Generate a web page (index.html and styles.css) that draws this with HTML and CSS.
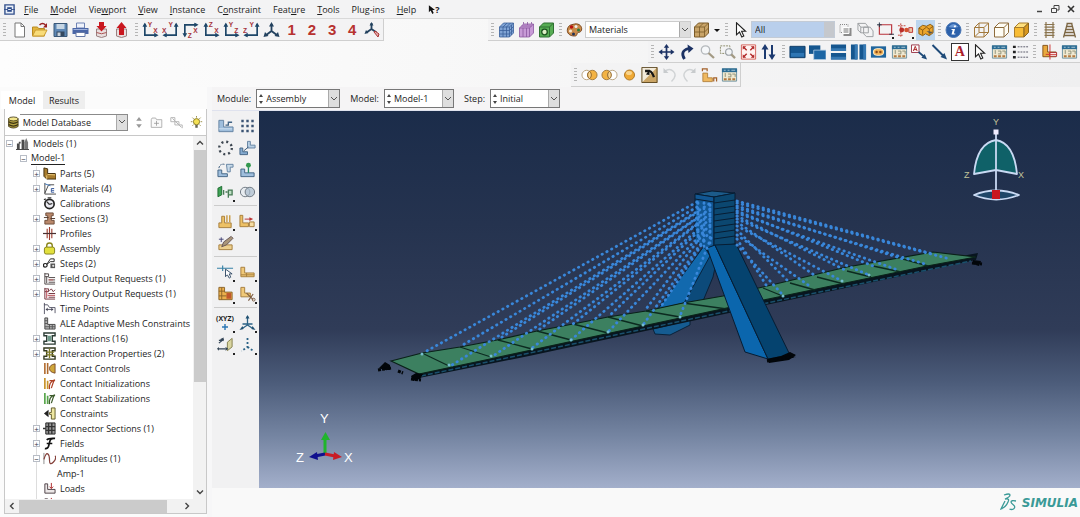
FILE: index.html
```html
<!DOCTYPE html>
<html lang="en">
<head>
<meta charset="utf-8">
<title>Model-1 - Assembly</title>
<link rel="stylesheet" href="styles.css">
</head>
<body>
<svg class="defs" aria-hidden="true">
  <symbol id="new" viewBox="0 0 16 16"><path d="M3.5 1h6l3.500 3.500V15h-9.500z" fill="#fff" stroke="#777"/><path d="M9.500 1v3.500H13" fill="none" stroke="#777"/></symbol>
  <symbol id="open" viewBox="0 0 16 16"><path d="M1 14V5h5l1 1.500h6V14z" fill="#e2b53c" stroke="#b98a20"/><path d="M1 14l3-6h11.500L12.500 14z" fill="#f8dc7a" stroke="#c99b30"/><path d="M8 3q3-3 6 0" fill="none" stroke="#922" stroke-width="1.500"/><path d="M15.500 1v4.500h-4z" fill="#922"/></symbol>
  <symbol id="save" viewBox="0 0 16 16"><path d="M1.500 1.500h13v13h-13z" fill="#5d87b5" stroke="#3b5877"/><path d="M4 2h8v5H4z" fill="#c6d6e4"/><path d="M4 9.500h8V14H4z" fill="#33475e"/><path d="M5 10.500h3V14H5z" fill="#c9d3dd"/></symbol>
  <symbol id="print" viewBox="0 0 16 16"><path d="M4 1h8v5H4z" fill="#eef2fb" stroke="#6f83b4"/><path d="M0 6h16v6H0z" fill="#4a66a6"/><path d="M1 7.500h14" stroke="#9fb2dc"/><path d="M3.500 10.500h9v4h-9z" fill="#fff" stroke="#6478a6"/></symbol>
  <symbol id="dbin" viewBox="0 0 16 16"><path d="M3 7v7q5 3 10 0V7z" fill="#e8dede" stroke="#9a8080"/><path d="M3 10.500q5 2.500 10 0" fill="none" stroke="#a55"/><path d="M5.500 0h5v4H13L8 9.500 3 4h2.500z" fill="#c9171f"/></symbol>
  <symbol id="dbout" viewBox="0 0 16 16"><path d="M3 7v7q5 3 10 0V7z" fill="#e8dede" stroke="#9a8080"/><path d="M5.500 13h5V6H13L8 0 3 6h2.500z" fill="#c9171f"/></symbol>
  <symbol id="axUR" viewBox="0 0 18 16"><path d="M3 2v11.500h11" fill="none" stroke="#1d4668" stroke-width="1.800"/><path d="M.5 4.500L3 0l2.500 4.500zM13 11l4.500 2.500L13 16z" fill="#1d4668"/></symbol>
  <symbol id="axUL" viewBox="0 0 18 16"><path d="M15 2v11.500H4" fill="none" stroke="#1d4668" stroke-width="1.800"/><path d="M12.500 4.500L15 0l2.500 4.500zM5 11L.5 13.500 5 16z" fill="#1d4668"/></symbol>
  <symbol id="axDR" viewBox="0 0 18 16"><path d="M3 13V2.500h11" fill="none" stroke="#1d4668" stroke-width="1.800"/><path d="M.5 11.500L3 16l2.500-4.500zM13 0l4.500 2.500L13 5z" fill="#1d4668"/></symbol>
  <symbol id="iso" viewBox="0 0 16 16"><path d="M8 2v7L2 13.500M8 9l6 4.500" fill="none" stroke="#23425f" stroke-width="1.800"/><path d="M5.500 4.500L8 0l2.500 4.500zM0 15l1.500-5L5 14zM16 15l-1.500-5-3.500 4z" fill="#23425f"/></symbol>
  <symbol id="isouser" viewBox="0 0 16 16"><path d="M7 1v6L2 10.500M7 7l5 3.500" fill="none" stroke="#23425f" stroke-width="1.800"/><path d="M5 3.500L7 0l2 3.500zM0 12l1.500-4L4 11z" fill="#23425f"/><path d="M9.500 10l4 5 1-3-4-3z" fill="#e6b0b0" stroke="#a33"/></symbol>
  <symbol id="mesh" viewBox="0 0 16 16"><path d="M1 5l4-4h10v10l-4 4H1z" fill="#7fa3d4"/><path d="M1 5h10v10M11 5l4-4M1 5v10h10l4-4V1H5L1 5M4.500 5v10M8 5v10M1 8.500h10l4-4M1 12h10l4-4M4.500 5l4-4M8 5l4-4M13 3v10" fill="none" stroke="#3a609a" stroke-width=".8"/></symbol>
  <symbol id="meshp" viewBox="0 0 16 16"><path d="M1 6l4-4h10v9l-4 4H1z" fill="#c79ad6"/><path d="M1 6h10v9M11 6l4-4M1 6v9h10l4-4V2H5L1 6M5 0v2M9 0v3M13 0v2M4.500 6v9M8 6v9M3 4h10" fill="none" stroke="#8a58a0" stroke-width=".8"/></symbol>
  <symbol id="meshg" viewBox="0 0 16 16"><path d="M1 5l4-4h10v10l-4 4H1z" fill="#57ad54" stroke="#2f7032"/><path d="M1 5h10v10M11 5l4-4" fill="none" stroke="#2f7032"/><circle cx="6" cy="10" r="2.800" fill="#dff0c8" stroke="#1d5420" stroke-width="1.300"/></symbol>
  <symbol id="palette" viewBox="0 0 16 16"><path d="M8 2c5-1 8 3 7 6s-3 2-4 3 0 3-3 3C3 14 0 11 1 7s3-4 7-5z" fill="#c98a4a" stroke="#7c4a22"/><circle cx="5" cy="5" r="1.700" fill="#b11"/><circle cx="9.500" cy="4.500" r="1.500" fill="#eee"/><circle cx="12" cy="8" r="1.500" fill="#2b7a3b"/><circle cx="4" cy="9" r="1.600" fill="#f4e6d0"/><circle cx="7" cy="12" r="1.500" fill="#235"/></symbol>
  <symbol id="cubetan" viewBox="0 0 16 16"><path d="M1 5l4-4h10v10l-4 4H1z" fill="#c9a468" stroke="#7a5a28"/><path d="M1 5h10v10M11 5l4-4M6 5v10M1 10h10l4-4M6 5l4-4" fill="none" stroke="#7a5a28" stroke-width=".8"/></symbol>
  <symbol id="cursor" viewBox="0 0 16 16"><path d="M4 .8v12l3-2.800 2.300 5 2-1-2.200-4.700h4z" fill="#fff" stroke="#222" stroke-width="1.100"/></symbol>
  <symbol id="squares" viewBox="0 0 16 16"><path d="M2.500 2.500h8v8h-8z" fill="none" stroke="#888" stroke-dasharray="1"/><path d="M6 6h8v8H6z" fill="#8a8a8a"/><path d="M5.500 5.500h6v6h-6z" fill="#b9b9b9" stroke="#fff"/></symbol>
  <symbol id="cubegray" viewBox="0 0 18 16"><path d="M1 1h8l3 4v6H4L1 8zM1 1l3 4h8M4 5v6M7 5h7l3 4v6h-7l-3-3z" fill="none" stroke="#9a9da0"/></symbol>
  <symbol id="rectsel" viewBox="0 0 18 16"><path d="M2.500 2.500h13v10h-13z" fill="none" stroke="#b9323a" stroke-width="1.200"/><path d="M2.500 0v5M0 2.500h5M13 12.500h5" stroke="#234"/></symbol>
  <symbol id="selents" viewBox="0 0 18 16"><path d="M1 3.500h8M4 1v14M1 13.500h6" stroke="#c03a32" stroke-dasharray="2 1"/><circle cx="5" cy="8" r="2.600" fill="#bb2d28"/><circle cx="10" cy="8" r="2.400" fill="#d4512e"/><path d="M12.500 5.500h4v5h-4z" fill="#eec7a6" stroke="#b33"/></symbol>
  <symbol id="part3" viewBox="0 0 18 16"><path d="M2 6l4-3 4 1 4-2 3 2v7l-4 3-4-2-3 2-4-2z" fill="#eca62d" stroke="#8a5a10"/><path d="M2 6l4 2 4-3M10 5l3 2 4-3M13 7v6M6 8v5" fill="none" stroke="#8a5a10"/><path d="M10 9l7 1-3 2z" fill="#555"/></symbol>
  <symbol id="info" viewBox="0 0 16 16"><circle cx="8" cy="8" r="7.500" fill="#2c61ab" stroke="#4a76b4"/><path d="M3 5q5-6 10 0-5 1-10 0" fill="#6d9ad6"/><path d="M8.600 3.500h2l-.4 1.800h-2zM6 7h3.500L8.300 11.500h1.500v1H6L7.200 8H6z" fill="#fff"/></symbol>
  <symbol id="cubewire" viewBox="0 0 16 16"><path d="M1 5.500h9.500V15H1zM5.500 1H15v9.500H5.500zM1 5.500L5.500 1M10.500 5.500L15 1M10.500 15l4.500-4.500M1 15l4.500-4.500" fill="none" stroke="#a2793c"/></symbol>
  <symbol id="cubehid" viewBox="0 0 16 16"><path d="M1 5.500h9.500V15H1zM1 5.500L5.500 1H15v9.500L10.500 15M10.500 5.500L15 1" fill="#fffdf5" stroke="#8e6c3c"/></symbol>
  <symbol id="cubefill" viewBox="0 0 16 16"><path d="M1 5.500h9.500V15H1z" fill="#f8bc35" stroke="#a87c2c"/><path d="M1 5.500L5.500 1H15l-4.500 4.500z" fill="#ffe07d" stroke="#a87c2c"/><path d="M15 1v9.500L10.500 15V5.500z" fill="#d89820" stroke="#8a641c"/></symbol>
  <symbol id="rail1" viewBox="0 0 16 16"><path d="M4.500 0v16M11.500 0v16M3 2.500h10M3 5.200h10M3 7.900h10M3 10.600h10M3 13.300h10" stroke="#8a744e" stroke-width="1.200"/></symbol>
  <symbol id="rail2" viewBox="0 0 16 16"><path d="M6 1L2 15.500M10 1l4 14.500M5 1.500h6M5 4.500h6M4 7.500h8M3.500 10.500h9M2.500 13.500h11" stroke="#7c6643" stroke-width="1.300"/></symbol>
  <symbol id="pan" viewBox="0 0 16 16"><path d="M8 2v12M2 8h12" stroke="#1c3264" stroke-width="1.700"/><path d="M5.300 3.800L8 0l2.700 3.800zM5.300 12.200L8 16l2.700-3.800zM3.800 5.300L0 8l3.800 2.700zM12.200 5.300L16 8l-3.800 2.700z" fill="#1c3264"/></symbol>
  <symbol id="rotate" viewBox="0 0 16 16"><path d="M5 15Q0 7 9 4.500" fill="none" stroke="#1c3264" stroke-width="2.800"/><path d="M8 .5l6 4L9 9z" fill="#1c3264"/></symbol>
  <symbol id="zoomer" viewBox="0 0 16 16"><circle cx="6" cy="6" r="4.200" fill="#f6f8fa" stroke="#b4b8bc" stroke-width="1.300"/><path d="M9 9l5.500 5" stroke="#a39a84" stroke-width="2.300"/></symbol>
  <symbol id="zoombox" viewBox="0 0 18 16"><path d="M1.500 1.500h10v8h-10z" fill="none" stroke="#886" stroke-dasharray="2 1"/><circle cx="10.500" cy="8" r="3.500" fill="#f3f5f7" stroke="#9aa0a6" stroke-width="1.200"/><path d="M13 10.500l4 4" stroke="#a39a84" stroke-width="2.300"/></symbol>
  <symbol id="fit" viewBox="0 0 18 18"><path d="M1 1h16v16H1z" fill="#fff4f2" stroke="#d35a52"/><path d="M3 3l4 4M15 3l-4 4M3 15l4-4M15 15l-4-4" stroke="#b22c2c" stroke-width="1.600"/><path d="M2.500 2.500h4l-4 4zM15.500 2.500h-4l4 4zM2.500 15.500h4l-4-4zM15.500 15.500h-4l4-4z" fill="#b22c2c"/></symbol>
  <symbol id="cycle" viewBox="0 0 16 16"><path d="M4.500 15V4M11.500 1v11" stroke="#1c3a70" stroke-width="2"/><path d="M1 5.500L4.500 0 8 5.500zM8 10.500l3.500 5.500 3.500-5.500z" fill="#1c3a70"/></symbol>
  <symbol id="w1" viewBox="0 0 18 16"><path d="M1 2h16v12H1z" fill="#15568f" stroke="#0c3a66"/><path d="M2 9h14v4H2z" fill="#2e76b4"/></symbol>
  <symbol id="w2" viewBox="0 0 18 16"><path d="M0 1h12v9H0z" fill="#15568f"/><path d="M5 6h13v10H5z" fill="#1d66a4" stroke="#b9d0e6" stroke-width=".8"/></symbol>
  <symbol id="w3" viewBox="0 0 18 16"><path d="M1 0h16v7H1zM1 9h16v7H1z" fill="#15568f"/><path d="M1 4h16v3H1zM1 13h16v3H1z" fill="#3679b3"/></symbol>
  <symbol id="w4" viewBox="0 0 18 16"><path d="M1 0h7v16H1zM10 0h7v16h-7z" fill="#15568f"/><path d="M5 0h3v16H5zM14 0h3v16h-3z" fill="#3679b3"/></symbol>
  <symbol id="w5" viewBox="0 0 18 16"><path d="M1 2h16v12H1z" fill="#20659d"/><rect x="3.500" y="4.500" width="11" height="7" rx="3.500" fill="#f0b155" stroke="#fff0cf"/><circle cx="7" cy="8" r="1.300" fill="#8c4a17"/><circle cx="11" cy="8" r="1.300" fill="#8c4a17"/></symbol>
  <symbol id="opts" viewBox="0 0 18 16"><path d="M1.500 1.500h15v13h-15z" fill="#efe8d0" stroke="#6b909f"/><path d="M1 1h16v4H1z" fill="#2d6d94"/><path d="M3 3h2M7 3h2M11 3h4" stroke="#a9c6d6"/><path d="M4.500 6v4M7.500 7h3v3h-3M12 7h3v3" fill="none" stroke="#8d9078"/><path d="M3 12.500h3M7.500 12.500h3M12 12.500h3" stroke="#b5793f" stroke-width="2"/></symbol>
  <symbol id="arrA" viewBox="0 0 18 16"><path d="M.5.500h8v8h-8z" fill="#fff" stroke="#934"/><path d="M2.500 7L4.500 2l2 5M3 5.500h3" stroke="#a22" fill="none"/><path d="M8 8l6 5" stroke="#1e4a78" stroke-width="1.800"/><path d="M17 16l-6-2 3.500-4z" fill="#1e4a78"/></symbol>
  <symbol id="arr" viewBox="0 0 16 16"><path d="M1 1l11 11" stroke="#1e4a78" stroke-width="2"/><path d="M15.500 15.500L9 13l4-4z" fill="#1e4a78"/></symbol>
  <symbol id="list" viewBox="0 0 18 16"><path d="M1 2.500h3M1 8h3M1 13.500h3" stroke="#222" stroke-width="2.500"/><path d="M6 2.500h11M6 8h11M6 13.500h11" stroke="#556" stroke-dasharray="2 1"/></symbol>
  <symbol id="lcross" viewBox="0 0 18 16"><path d="M2 1h5v7h9v5H2z" fill="#e9a93d" stroke="#835116"/><path d="M9 8.500h7.500v4H9z" fill="#fff" stroke="#a33"/><path d="M9.500 0v16M5 10.500h12" stroke="#c33"/></symbol>
  <symbol id="venn1" viewBox="0 0 18 16"><circle cx="6" cy="8" r="5" fill="#fff" stroke="#b8a17c"/><circle cx="12" cy="8" r="5" fill="#f3b344" stroke="#a37a3c"/><path d="M9 4a5 5 0 0 1 0 8 5 5 0 0 1 0-8" fill="#f8d48e" stroke="#8e6326"/></symbol>
  <symbol id="venn2" viewBox="0 0 18 16"><circle cx="6" cy="8" r="5" fill="#f3b344" stroke="#a37a3c"/><circle cx="12" cy="8" r="5" fill="#fff" stroke="#b8a17c"/><path d="M9 4a5 5 0 0 1 0 8 5 5 0 0 1 0-8" fill="#f8d48e" stroke="#8e6326"/></symbol>
  <symbol id="disc" viewBox="0 0 16 16"><circle cx="8" cy="8" r="5" fill="#efa935" stroke="#b07a29"/><ellipse cx="7.500" cy="6" rx="3" ry="2" fill="#f9d48c"/></symbol>
  <symbol id="pick" viewBox="0 0 18 18"><path d="M0 0h18v18H0z" fill="#cba565"/><path d="M0 18L18 0H0z" fill="#f3ebda"/><path d="M.5.500h17v17H.500z" fill="none" stroke="#54401d"/><path d="M4 4.500h5q3 1 5 7" fill="none" stroke="#151515" stroke-width="2.600"/><path d="M5 8.500L9 3v6z" fill="#151515"/></symbol>
  <symbol id="undo" viewBox="0 0 16 16"><path d="M3 4.500q5-4 9 0t-2 10" fill="none" stroke="#d0d3d5" stroke-width="1.400"/><path d="M2 1v5h5z" fill="#c8cbcd"/></symbol>
  <symbol id="redo" viewBox="0 0 16 16"><path d="M13 4.500q-5-4-9 0t2 10" fill="none" stroke="#d0d3d5" stroke-width="1.400"/><path d="M14 1v5H9z" fill="#c8cbcd"/></symbol>
  <symbol id="instset" viewBox="0 0 18 16"><path d="M2 6h5v5h5v4H2z" fill="#efb85f" stroke="#b5843f"/><path d="M1.500 4V1.500h5V4M13.500 15v-4h3v4" fill="none" stroke="#a4612a" stroke-width="1.300"/></symbol>
  <symbol id="Lb" viewBox="0 0 18 16"><path d="M2 2h5v7h10v5H2z" fill="#9fbedc" stroke="#6483a2"/><path d="M9 7h3V4h4" fill="none" stroke="#426485" stroke-width="1.400"/><path d="M2 11h14" stroke="#d3e3f1"/></symbol>
  <symbol id="dots" viewBox="0 0 16 16"><path d="M3 3h.01M8 3h.01M13 3h.01M3 8h.01M8 8h.01M13 8h.01M3 13h.01M8 13h.01M13 13h.01" stroke="#3b5474" stroke-width="2.400" stroke-linecap="square"/></symbol>
  <symbol id="ring" viewBox="0 0 16 16"><circle cx="8" cy="8" r="6.300" fill="none" stroke="#3d4650" stroke-width="2.300" stroke-dasharray="2 2.950"/></symbol>
  <symbol id="Lmove" viewBox="0 0 18 16"><path d="M9 1h3v4h5v3H9z" fill="#b7cfe4" stroke="#6483a2"/><path d="M1 8h3v4h5v3H1z" fill="#86abd0" stroke="#426485"/><path d="M10 7l-5 4" stroke="#357"/></symbol>
  <symbol id="Lrot" viewBox="0 0 18 16"><path d="M1 8h4v4h6v3H1z" fill="#9fbedc" stroke="#426485"/><path d="M10 2h7v3h-3v5h-3z" fill="#c8dae9" stroke="#6483a2"/><path d="M2 6q1-5 6-4" fill="none" stroke="#357" stroke-dasharray="2 1"/></symbol>
  <symbol id="Lpin" viewBox="0 0 18 16"><path d="M2 7h4v4h10v4H2z" fill="#9fbedc" stroke="#426485"/><path d="M10 5v6" stroke="#286" stroke-width="1.400"/><circle cx="10" cy="3" r="2.600" fill="#33984e"/></symbol>
  <symbol id="merge" viewBox="0 0 18 16"><path d="M1 4l4-2v9l-4 2z" fill="#3fa255" stroke="#1d6b30"/><path d="M7 6v5M9 8h2M12 11V6h4v5h-4v3" fill="#bfe0c4" stroke="#487a55" stroke-width="1.400"/></symbol>
  <symbol id="bool" viewBox="0 0 18 16"><circle cx="6.500" cy="8" r="5" fill="#e8ecf0" stroke="#6c7680"/><circle cx="11.500" cy="8" r="5" fill="#a9bccd" fill-opacity=".7" stroke="#6c7680"/></symbol>
  <symbol id="Ly" viewBox="0 0 18 16"><path d="M2 10h3V3h3v7h7v5H2z" fill="#edc166" stroke="#a67d3c"/><path d="M10.500 2v7M13.500 2v7" stroke="#c99b45" stroke-width="1.500"/></symbol>
  <symbol id="Ly2" viewBox="0 0 18 16"><path d="M1 2h3v8h6v4H1z" fill="#edc166" stroke="#a67d3c"/><path d="M11 9h5v5h-5z" fill="#f5dda4" stroke="#a67d3c"/><path d="M6 6h6" stroke="#b33"/><path d="M15 6l-4-2v4z" fill="#b33"/></symbol>
  <symbol id="Lface" viewBox="0 0 18 16"><path d="M2 3h4v6h10v4H2z" fill="#f0c979" stroke="#a67d3c"/><path d="M2 11h14M8 9v4" stroke="#a67d3c"/></symbol>
  <symbol id="Lcell" viewBox="0 0 18 16"><path d="M2 1h6v5h8v8H2z" fill="#eaaf4c" stroke="#8b6429"/><path d="M10 7h5v6h-5z" fill="#c0572c"/><path d="M2 5h6M5 1v13M2 10h8" stroke="#8b6429"/></symbol>
  <symbol id="Lcut" viewBox="0 0 18 16"><path d="M2 1h4v6h6v4H2z" fill="#f0c979" stroke="#a67d3c"/><path d="M8 7l7 7M15 8l-5 7" stroke="#7b5b42" stroke-width="1.200"/><circle cx="15.500" cy="14" r="1.500" fill="none" stroke="#7b5b42"/></symbol>
  <symbol id="Lpen" viewBox="0 0 18 16"><path d="M2 10h14v5H2z" fill="#edd08e" stroke="#a67d3c"/><path d="M5 12l2-5 8-6 2 2-7 7z" fill="#a9967a" stroke="#655"/><path d="M2 4h5M4.500 2v5" stroke="#447"/></symbol>
  <symbol id="datum" viewBox="0 0 18 16"><path d="M0 4h17M6 1v6" stroke="#3681a6" stroke-width="1.200"/><path d="M9 5v8l2-2 2 3.500 1.500-1L13 10h3z" fill="#fff" stroke="#334b66"/></symbol>
  <symbol id="axes" viewBox="0 0 16 16"><path d="M8 1v9L2 14M8 10l6 4M3 9h10" fill="none" stroke="#2a6286" stroke-width="1.300"/><path d="M6 3.500L8 0l2 3.500zM0 15l3-4 1 3zM16 15l-3-4-1 3z" fill="#1f4f70"/></symbol>
  <symbol id="plane" viewBox="0 0 18 16"><path d="M11 5l5-4v9l-5 4z" fill="#d9d5a0" stroke="#84804e"/><path d="M2 6l5-4M1 12h8M2 3h4" stroke="#345" stroke-width="1.300"/><path d="M7 0v4l-4-2zM9 10v4l3-2zM2 10v4l-2-2z" fill="#345"/></symbol>
  <symbol id="axdots" viewBox="0 0 16 16"><path d="M8 1v9L2 14M8 10l6 4" fill="none" stroke="#2a6286" stroke-width="1.800" stroke-dasharray="2"/></symbol>
  <symbol id="db" viewBox="0 0 16 16"><path d="M2 3v10q6 4 12 0V3z" fill="#b4a243" stroke="#3c3413"/><ellipse cx="8" cy="3.500" rx="6" ry="2.500" fill="#f2e58c" stroke="#3c3413"/><path d="M2 7q6 4 12 0M2 10.500q6 4 12 0" fill="none" stroke="#3c3413" stroke-width="1.500"/></symbol>
  <symbol id="bulb" viewBox="0 0 16 16"><circle cx="8" cy="7" r="3.800" fill="#f4e155" stroke="#776a18"/><path d="M6.500 11h3v3.500h-3z" fill="#665"/><path d="M8 0v2M1 7h2M13 7h2M3 2l1.500 1.500M13 2l-1.500 1.500M3 12l1.500-1.500M13 12l-1.500-1.500" stroke="#8d7e27"/></symbol>
  <symbol id="folder" viewBox="0 0 16 16"><path d="M1.500 4.500V14h13V4.500H8L7 2.500H2.500z" fill="#fafafa" stroke="#a5a5a5"/><path d="M8 6v6M5 9h6" stroke="#999"/></symbol>
  <symbol id="link" viewBox="0 0 16 16"><path d="M1 2h5v5H1zM6 7h5v4H6zM3 3l11 11M11 11h4v4" fill="none" stroke="#b5b5b5" stroke-width="1.200"/></symbol>
  <symbol id="t-models" viewBox="0 0 14 14"><path d="M1 13V7h3v6zM3 5h2v2H3zM6 13V3h3v10z" fill="#4b4b4b"/><path d="M9 13V6l2-5 2 5v7z" fill="#777"/><path d="M0 13.500h14" stroke="#333"/></symbol>
  <symbol id="t-part" viewBox="0 0 14 14"><path d="M1 1l4 1v5h8l1 1v5H4l-3-3z" fill="#a87c2e" stroke="#3d2908"/><path d="M5 8l8 .5M4 9v4" stroke="#edcc7e"/></symbol>
  <symbol id="t-mat" viewBox="0 0 14 14"><path d="M2 1v12h12M2 12L6 3h6" fill="none" stroke="#444"/><path d="M2 2l6 2" stroke="#3a74b8"/><path d="M12 7H9v4h3M9 9h3" fill="none" stroke="#35579b"/></symbol>
  <symbol id="t-cal" viewBox="0 0 14 14"><circle cx="7" cy="7.500" r="5" fill="#ebebf2" stroke="#222" stroke-width="1.800"/><path d="M7 8L4 5M7 8l3-1M5 1h4M1 3l2-1" stroke="#333" stroke-width="1.400"/></symbol>
  <symbol id="t-sec" viewBox="0 0 14 14"><path d="M3 1h8v3H9v5h3v4H2V9h3V4H3z" fill="#b8876a" stroke="#6c4c38"/><path d="M1 6h5M8 7h5" stroke="#4c3428"/></symbol>
  <symbol id="t-prof" viewBox="0 0 14 14"><path d="M4.500 2v10M7 0v14M9.500 2v10" stroke="#9b3c2f" stroke-width="1.200"/><path d="M0 7h14" stroke="#4b3030" stroke-width="1.300"/></symbol>
  <symbol id="t-asm" viewBox="0 0 14 14"><path d="M4 6V4q0-3 3-3t3 3v2" fill="none" stroke="#8a861d" stroke-width="1.500"/><rect x="1.500" y="5.500" width="11" height="7.500" rx="2" fill="#e2e03e" stroke="#7f7c1d"/></symbol>
  <symbol id="t-step" viewBox="0 0 14 14"><circle cx="2.500" cy="9" r="2" fill="none" stroke="#222" stroke-width="1.300"/><path d="M4 8l4-6h4v3H8z" fill="none" stroke="#222"/><path d="M8 7h5v5H8z" fill="#555"/><circle cx="11" cy="9.500" r="1.200" fill="#ddd"/></symbol>
  <symbol id="t-field" viewBox="0 0 14 14"><path d="M2 1v12h11M2 2h4v3H2M4 5v7M6 6h7M6 8.500h7M6 11h7" fill="none" stroke="#4a4141"/><path d="M6 8.500h5" stroke="#b55"/></symbol>
  <symbol id="t-hist" viewBox="0 0 14 14"><path d="M2 1v12h11M2 2h4v3H2M7 4l2-2 2 3 2-2M6 7h7M6 11h7" fill="none" stroke="#6d2b35"/><path d="M5 9h8M4 3v9" stroke="#b33c48"/></symbol>
  <symbol id="t-time" viewBox="0 0 14 14"><path d="M1.500 1v12M1 3h4l2 3h6v6M3 8h8" fill="none" stroke="#556"/><path d="M5 6v4L3 8zM9 6v4l2-2z" fill="#445"/></symbol>
  <symbol id="t-ale" viewBox="0 0 14 14"><path d="M2 1h3v7h8v5H2z" fill="#b8b8b8" stroke="#444"/><path d="M2 4h3M2 7h3M7 8v5M10 8v5M2 10.500h11" stroke="#555"/></symbol>
  <symbol id="t-int" viewBox="0 0 14 14"><path d="M1 1h12v3h-3v6h3v3H1v-3h3V4H1z" fill="#fff" stroke="#2c3c35" stroke-width="1.500"/><path d="M5 4h4v6H5z" fill="#6f9b8a"/></symbol>
  <symbol id="t-intp" viewBox="0 0 14 14"><path d="M1 1h12v3h-3v6h3v3H1v-3h3V4H1z" fill="#fff" stroke="#33391f" stroke-width="1.500"/><path d="M3 5.500h9M3 8.500h9M7 2v10" stroke="#807b25" stroke-width="1.500"/></symbol>
  <symbol id="t-cc" viewBox="0 0 14 14"><path d="M2 1v12M5 1v12" stroke="#b06a2c" stroke-width="1.700"/><path d="M13 2Q7 3 7 7t6 5z" fill="#cfa63a" stroke="#7b4a28"/></symbol>
  <symbol id="t-ci" viewBox="0 0 14 14"><path d="M2 1v12M5 4v9" stroke="#c9942b" stroke-width="1.800"/><path d="M7 13Q6 5 13 3M9 12l3-9M7 4h6" stroke="#ad3f24" fill="none" stroke-width="1.300"/></symbol>
  <symbol id="t-cs" viewBox="0 0 14 14"><path d="M2 1v12M5 4v9" stroke="#58a64c" stroke-width="1.800"/><path d="M7 13Q6 5 13 3M9 12l3-9M7 4h6" stroke="#3c5b2c" fill="none" stroke-width="1.300"/></symbol>
  <symbol id="t-con" viewBox="0 0 14 14"><path d="M1 7l5-4v8z" fill="#222"/><path d="M7 6h2V1h4v12H9V8H7z" fill="#eee7a3" stroke="#5c5626"/></symbol>
  <symbol id="t-cns" viewBox="0 0 14 14"><path d="M3 1h10v12H3z" fill="#9a9a9a" stroke="#222"/><path d="M6 1v12M9.500 1v12M3 5h10M3 9h10M0 7h3" stroke="#333" stroke-width="1.500"/></symbol>
  <symbol id="t-fld" viewBox="0 0 14 14"><path d="M13 1.500Q8 1 7.500 4L6 10q-1 3-4 2.500M4 7h6M4 3q2-2 9-1.500" fill="none" stroke="#111" stroke-width="1.800"/></symbol>
  <symbol id="t-amp" viewBox="0 0 14 14"><path d="M1 1v12" stroke="#888"/><path d="M1 8q2-7 4-6t2 7 4 2 2-7" fill="none" stroke="#84403a" stroke-width="1.300"/></symbol>
  <symbol id="t-load" viewBox="0 0 14 14"><path d="M2 2h3v6h8v4H2z" fill="#ece8e8" stroke="#4a3d42"/><path d="M9 1v6M7 5l2 2 2-2" fill="none" stroke="#a22"/></symbol>
</svg>

<header class="menubar">
  <svg class="app-icon" viewBox="0 0 12 12" aria-hidden="true"><path d="M1 1h10v10H1z" fill="#e8eef8" stroke="#33508c" stroke-width="1.500"/><path d="M3.500 3.500h5v5h-5z" fill="#2c4b8b"/><path d="M0 6h12" stroke="#33508c"/><path d="M4.500 6h3" stroke="#fff"/></svg>
  <nav class="menus">
    <button><u>F</u>ile</button><button><u>M</u>odel</button><button>Vie<u>w</u>port</button><button><u>V</u>iew</button><button><u>I</u>nstance</button><button>C<u>o</u>nstraint</button><button>Feat<u>u</u>re</button><button><u>T</u>ools</button><button>Plu<u>g</u>-ins</button><button><u>H</u>elp</button>
    <button class="whats" aria-label="Context help"><svg viewBox="0 0 8 10"><path d="M1 0v8l2-2 2 4 1.500-1L5 5.500h3z" fill="#111"/></svg><b>?</b></button>
  </nav>
  <div class="winctl">
    <button aria-label="Minimize"><svg viewBox="0 0 10 10"><path d="M3 7.500h5" stroke="#444" stroke-width="1.500"/></svg></button>
    <button aria-label="Restore"><svg viewBox="0 0 10 10"><path d="M1.500 4.500h5v4h-5zM4 4V1.500h5V6H6.500" fill="none" stroke="#444"/></svg></button>
    <button aria-label="Close"><svg viewBox="0 0 10 10"><path d="M2 2l6 6M8 2L2 8" stroke="#333" stroke-width="1.600"/></svg></button>
  </div>
</header>

<section class="toolbars">
  <div class="toolrow">
    <div class="bar file"><i class="grip"></i><button aria-label="New"><svg><use href="#new"/></svg></button><button aria-label="Open"><svg><use href="#open"/></svg></button><button aria-label="Save"><svg><use href="#save"/></svg></button><button aria-label="Print"><svg><use href="#print"/></svg></button><button aria-label="Import"><svg><use href="#dbin"/></svg></button><button aria-label="Export"><svg><use href="#dbout"/></svg></button></div>
    <div class="bar views"><i class="grip"></i>
      <button aria-label="Front view"><svg viewBox="0 0 18 16"><use href="#axUR"/><text x="6" y="5">Y</text><text x="12" y="11">X</text></svg></button>
      <button aria-label="Back view"><svg viewBox="0 0 18 16"><use href="#axUL"/><text x="7" y="5">Y</text><text x="0" y="11">X</text></svg></button>
      <button aria-label="Top view"><svg viewBox="0 0 18 16"><use href="#axDR"/><text x="12" y="11">X</text><text x="6" y="16">Z</text></svg></button>
      <button aria-label="Bottom view"><svg viewBox="0 0 18 16"><use href="#axUR"/><text x="6" y="5">Z</text><text x="12" y="11">X</text></svg></button>
      <button aria-label="Left view"><svg viewBox="0 0 18 16"><use href="#axUR"/><text x="6" y="5">Y</text><text x="12" y="11">Z</text></svg></button>
      <button aria-label="Right view"><svg viewBox="0 0 18 16"><use href="#axUL"/><text x="7" y="5">Y</text><text x="0" y="11">Z</text></svg></button>
      <button aria-label="Isometric view"><svg><use href="#iso"/></svg></button>
      <button class="num">1</button><button class="num">2</button><button class="num">3</button><button class="num">4</button>
      <button aria-label="User view"><svg><use href="#isouser"/></svg></button></div>
    <div class="bar right"><i class="grip"></i><button aria-label="Mesh"><svg><use href="#mesh"/></svg></button><button aria-label="Loads"><svg><use href="#meshp"/></svg></button><button aria-label="Geometry"><svg><use href="#meshg"/></svg></button>
      <i class="grip"></i><button aria-label="Color code"><svg><use href="#palette"/></svg></button>
      <span class="combo materials"><select aria-label="Color mapping"><option>Materials</option></select></span>
      <button aria-label="Cube"><svg><use href="#cubetan"/></svg></button><button class="caret" aria-label="Cube options"><svg viewBox="0 0 8 8"><path d="M1 3h6L4 6z" fill="#111"/></svg></button>
      <i class="grip"></i><button aria-label="Select"><svg><use href="#cursor"/></svg></button>
      <span class="combo filter"><select aria-label="Selection filter"><option>All</option></select></span>
      <button aria-label="Selection shape"><svg><use href="#squares"/></svg></button><button aria-label="Inside"><svg><use href="#cubegray"/></svg></button><button class="more" aria-label="Rectangle"><svg><use href="#rectsel"/></svg></button><button class="more" aria-label="Entities"><svg><use href="#selents"/></svg></button><button class="on" aria-label="Parts"><svg><use href="#part3"/></svg></button>
      <i class="grip"></i><button aria-label="Query"><svg><use href="#info"/></svg></button>
      <i class="grip"></i><button aria-label="Wireframe"><svg><use href="#cubewire"/></svg></button><button aria-label="Hidden"><svg><use href="#cubehid"/></svg></button><button aria-label="Shaded"><svg><use href="#cubefill"/></svg></button>
      <i class="grip"></i><button aria-label="Parallel"><svg><use href="#rail1"/></svg></button><button aria-label="Perspective"><svg><use href="#rail2"/></svg></button></div>
  </div>
  <div class="toolrow">
    <div class="bar right"><i class="grip"></i><button aria-label="Pan"><svg><use href="#pan"/></svg></button><button aria-label="Rotate"><svg><use href="#rotate"/></svg></button><button aria-label="Magnify"><svg><use href="#zoomer"/></svg></button><button aria-label="Box zoom"><svg><use href="#zoombox"/></svg></button><button aria-label="Fit"><svg><use href="#fit"/></svg></button><button aria-label="Cycle"><svg><use href="#cycle"/></svg></button>
      <i class="grip"></i><button aria-label="Viewport"><svg><use href="#w1"/></svg></button><button aria-label="Cascade"><svg><use href="#w2"/></svg></button><button aria-label="Tile horizontally"><svg><use href="#w3"/></svg></button><button aria-label="Tile vertically"><svg><use href="#w4"/></svg></button><button aria-label="Link"><svg><use href="#w5"/></svg></button><button aria-label="Viewport options"><svg><use href="#opts"/></svg></button>
      <button aria-label="Callout"><svg><use href="#arrA"/></svg></button><button aria-label="Arrow"><svg><use href="#arr"/></svg></button><button class="text" aria-label="Text">A</button><button aria-label="Edit"><svg><use href="#cursor"/></svg></button><button aria-label="Annotation options"><svg><use href="#opts"/></svg></button><button aria-label="Annotation list"><svg><use href="#list"/></svg></button>
      <i class="grip"></i><button aria-label="View cut"><svg><use href="#lcross"/></svg></button><button aria-label="View cut options"><svg><use href="#opts"/></svg></button></div>
  </div>
  <div class="toolrow">
    <div class="bar right display"><i class="grip"></i><button aria-label="Replace"><svg><use href="#venn1"/></svg></button><button aria-label="Remove"><svg><use href="#venn2"/></svg></button><button aria-label="All"><svg><use href="#disc"/></svg></button><button aria-label="Pick"><svg><use href="#pick"/></svg></button><button aria-label="Undo"><svg><use href="#undo"/></svg></button><button aria-label="Redo"><svg><use href="#redo"/></svg></button><button aria-label="Instances"><svg><use href="#instset"/></svg></button><button aria-label="Display options"><svg><use href="#opts"/></svg></button></div>
  </div>
</section>

<div class="work">
  <aside class="side">
    <div class="tabs" role="tablist"><button role="tab" aria-selected="true">Model</button><button role="tab" aria-selected="false">Results</button></div>
    <div class="panel">
      <div class="source">
        <svg><use href="#db"/></svg>
        <span class="combo"><select aria-label="Database"><option>Model Database</option></select></span>
        <button class="updown" aria-label="Move"><svg viewBox="0 0 8 14"><path d="M1 5l3-4 3 4zM1 9l3 4 3-4z" fill="#999"/></svg></button>
        <button aria-label="Filter"><svg><use href="#folder"/></svg></button><button aria-label="Link"><svg><use href="#link"/></svg></button><button aria-label="Tip"><svg><use href="#bulb"/></svg></button>
      </div>
      <div class="treebox">
        <ul class="tree">
          <li class="l0"><button class="tg" aria-label="Collapse">−</button><svg><use href="#t-models"/></svg>Models (1)</li>
          <li class="l1"><button class="tg" aria-label="Collapse">−</button><span class="current">Model-1</span></li>
          <li><button class="tg" aria-label="Expand">+</button><svg><use href="#t-part"/></svg>Parts (5)</li>
          <li><button class="tg" aria-label="Expand">+</button><svg><use href="#t-mat"/></svg>Materials (4)</li>
          <li><i></i><svg><use href="#t-cal"/></svg>Calibrations</li>
          <li><button class="tg" aria-label="Expand">+</button><svg><use href="#t-sec"/></svg>Sections (3)</li>
          <li><i></i><svg><use href="#t-prof"/></svg>Profiles</li>
          <li><button class="tg" aria-label="Expand">+</button><svg><use href="#t-asm"/></svg>Assembly</li>
          <li><button class="tg" aria-label="Expand">+</button><svg><use href="#t-step"/></svg>Steps (2)</li>
          <li><button class="tg" aria-label="Expand">+</button><svg><use href="#t-field"/></svg>Field Output Requests (1)</li>
          <li><button class="tg" aria-label="Expand">+</button><svg><use href="#t-hist"/></svg>History Output Requests (1)</li>
          <li><i></i><svg><use href="#t-time"/></svg>Time Points</li>
          <li><i></i><svg><use href="#t-ale"/></svg>ALE Adaptive Mesh Constraints</li>
          <li><button class="tg" aria-label="Expand">+</button><svg><use href="#t-int"/></svg>Interactions (16)</li>
          <li><button class="tg" aria-label="Expand">+</button><svg><use href="#t-intp"/></svg>Interaction Properties (2)</li>
          <li><i></i><svg><use href="#t-cc"/></svg>Contact Controls</li>
          <li><i></i><svg><use href="#t-ci"/></svg>Contact Initializations</li>
          <li><i></i><svg><use href="#t-cs"/></svg>Contact Stabilizations</li>
          <li><i></i><svg><use href="#t-con"/></svg>Constraints</li>
          <li><button class="tg" aria-label="Expand">+</button><svg><use href="#t-cns"/></svg>Connector Sections (1)</li>
          <li><button class="tg" aria-label="Expand">+</button><svg><use href="#t-fld"/></svg>Fields</li>
          <li><button class="tg" aria-label="Collapse">−</button><svg><use href="#t-amp"/></svg>Amplitudes (1)</li>
          <li class="l3">Amp-1</li>
          <li><i></i><svg><use href="#t-load"/></svg>Loads</li>
          <li><i></i><svg><use href="#t-load"/></svg></li>
        </ul>
        <div class="vbar"><svg viewBox="0 0 8 8"><path d="M1 5.500l3-3 3 3" fill="none" stroke="#444" stroke-width="1.400"/></svg><span></span><svg viewBox="0 0 8 8"><path d="M1 2.500l3 3 3-3" fill="none" stroke="#444" stroke-width="1.400"/></svg></div>
      </div>
      <div class="hbar"><svg viewBox="0 0 8 8"><path d="M5.500 1l-3 3 3 3" fill="none" stroke="#444" stroke-width="1.400"/></svg><span></span><svg viewBox="0 0 8 8"><path d="M2.500 1l3 3-3 3" fill="none" stroke="#444" stroke-width="1.400"/></svg></div>
    </div>
  </aside>

  <main class="main">
    <form class="context">
      <label for="module">Module:</label><span class="combo spin"><select id="module"><option>Assembly</option></select></span>
      <label for="model">Model:</label><span class="combo spin short"><select id="model"><option>Model-1</option></select></span>
      <label for="step">Step:</label><span class="combo spin short"><select id="step"><option>Initial</option></select></span>
    </form>
    <div class="stage">
      <div class="toolbox">
        <div class="tools"><button aria-label="Create instance"><svg><use href="#Lb"/></svg></button><button aria-label="Linear pattern"><svg><use href="#dots"/></svg></button><button aria-label="Radial pattern"><svg><use href="#ring"/></svg></button><button aria-label="Translate"><svg><use href="#Lmove"/></svg></button><button aria-label="Rotate instance"><svg><use href="#Lrot"/></svg></button><button aria-label="Translate to"><svg><use href="#Lpin"/></svg></button><button class="more" aria-label="Constraint"><svg><use href="#merge"/></svg></button><button aria-label="Merge or cut"><svg><use href="#bool"/></svg></button></div>
        <div class="tools"><button class="more" aria-label="Feature"><svg><use href="#Ly"/></svg></button><button class="more" aria-label="Partition"><svg><use href="#Ly2"/></svg></button><button aria-label="Edit feature"><svg><use href="#Lpen"/></svg></button></div>
        <div class="tools"><button class="more" aria-label="Partition edge"><svg><use href="#datum"/></svg></button><button class="more" aria-label="Partition face"><svg><use href="#Lface"/></svg></button><button class="more" aria-label="Partition cell"><svg><use href="#Lcell"/></svg></button><button class="more" aria-label="Virtual topology"><svg><use href="#Lcut"/></svg></button></div>
        <div class="tools"><button class="more xyz" aria-label="Datum point"><b>(XYZ)</b><svg viewBox="0 0 8 8"><path d="M4 1v6M1 4h6" stroke="#2a76b4" stroke-width="1.400"/></svg></button><button class="more" aria-label="Datum axis"><svg><use href="#axes"/></svg></button><button class="more" aria-label="Datum plane"><svg><use href="#plane"/></svg></button><button class="more" aria-label="Datum system"><svg><use href="#axdots"/></svg></button></div>
      </div>
      <div class="viewport">
          <svg viewBox="259 111 821 377" preserveAspectRatio="xMidYMid meet" role="img" aria-label="Cable-stayed bridge assembly">
            <g stroke="#071d33" stroke-width=".9" stroke-linejoin="round">
              <path d="M653 329l37-9v5l-20 10-15-1z" fill="#155c91"/>
              <path d="M706 248l10 15-3 14-10 24-20 4z" fill="#0c4a7a"/>
              <path d="M704 246l-46 63 26-6 26-47z" fill="#1269ae"/>
            </g>
            <path d="M391 361l28 11v6l110-22 251-54 196-42 2-7z" fill="#08151f"/>
            <path d="M421 376l360-76 190-39" fill="none" stroke="#1a506c" stroke-width="1.500" stroke-dasharray="5 2"/>
            <path d="M391 361l31-8 38-6 37-7 40-9 36-7 35-7 38-6 37-8 40-7 40-9 84-20 86-15 43 5-49 9-144 30-103 22-190 41-71 15z" fill="#3c8060" stroke="#0a2119" stroke-width="1.200"/>
            <path d="M422 353l27 13M460 347l31 10M498 340l34 9M537 331l34 9M573 324l35 9M608 317l35 9M646 311l34 6M683 303l44 6M763 288l22 9M790 283l25 7M817 277l27 7M847 271l24 6M873 266l28 6M903 259l25 7" stroke="#0c2a20" stroke-width="1.300"/>
            <g stroke="#071d33" stroke-linejoin="round">
              <path d="M695 194l17-3 23 2-21 4z" fill="#1c5b8a"/>
              <path d="M695 194l19 3v49l-7 4-12-10z" fill="#115692"/>
              <path d="M714 197l21-4v51l-21 3z" fill="#0b4770"/>
              <path d="M714 203l21-3M714 209l21-3M714 215l21-3M714 221l21-3M714 227l21-3M714 233l21-3M714 239l21-3M695 199l19 3"/>
              <path d="M707 248l8-3 53 114-23-7z" fill="#0b66ad"/>
              <path d="M715 245l21-1 54 111-22 4z" fill="#05436f"/>
            </g>
            <g class="cables">
              <path d="M697 202L423 353"/><path d="M697 207L461 346"/><path d="M698 212L499 339"/><path d="M699 217L537 331"/><path d="M700 222L573 324"/><path d="M702 228L608 317"/><path d="M703 234L646 309"/><path d="M704 241L660 308"/>
              <path d="M709 204L452 365"/><path d="M710 209L493 356"/><path d="M710 214L532 348"/><path d="M710 219L571 340"/><path d="M710 225L608 332"/><path d="M710 231L643 325"/><path d="M711 238L680 316"/>
              <path d="M698 203v38M704 203v44M710 205v42"/>
              <path d="M737 201L933 254"/><path d="M737 206L903 259"/><path d="M737 211L873 266"/><path d="M737 216L847 271"/><path d="M737 222L817 277"/><path d="M737 230L790 283"/><path d="M737 239L768 288"/>
              <path d="M737 203L950 259"/><path d="M737 208L925 264"/><path d="M737 213L898 270"/><path d="M737 219L869 275"/><path d="M737 226L842 281"/><path d="M737 235L811 287"/><path d="M737 245L781 293"/>
            </g>
            <g fill="#74bdcf"><circle cx="422" cy="354" r="1.500"/><circle cx="449" cy="365" r="1.500"/><circle cx="491" cy="356" r="1.500"/><circle cx="532" cy="349" r="1.500"/><circle cx="571" cy="340" r="1.500"/><circle cx="608" cy="332" r="1.500"/><circle cx="643" cy="325" r="1.500"/><circle cx="680" cy="317" r="1.500"/><circle cx="783" cy="296" r="1.500"/><circle cx="842" cy="281" r="1.500"/><circle cx="869" cy="275" r="1.500"/></g>
            <path d="M379 368l6-6 5 3v5h-6zM411 376l5-3 7 1-3 5-7 2zM767 359l14-3 9-4 6 3-7 5-20 3zM973 260l8 1-2 5-6-2z" fill="#02060a"/><path d="M378 370l13-2M398 371l5 2M411 379l10 1M767 361l28-5M972 263l10 1" stroke="#02060a" stroke-width="3" stroke-dasharray="3 1"/>
            <g fill="#0f6168" stroke="#c9d9f3" stroke-width="1.800" stroke-linejoin="round"><path d="M974 174q3-31 22-34 18 3 21 34l-21-4z"/><path d="M974 195q22-9 45 0-23 9-45 0z" fill="#1f4668"/><path d="M996 132v62" fill="none"/></g>
            <path d="M993.500 129.500h5v5h-5z" fill="#f0ecff"/><path d="M992 190h8v9h-8z" fill="#c9171f"/>
            <g class="compass"><text x="993" y="125">Y</text><text x="964" y="178">Z</text><text x="1018" y="178">X</text></g>
            <path d="M325 454v-16" stroke="#20b52b" stroke-width="3"/><path d="M321 440l4.500-8 4.500 8z" fill="#20b52b"/>
            <path d="M325 454l-10 2" stroke="#10108e" stroke-width="3"/><path d="M309 457l8-5 1 8z" fill="#10108e"/>
            <path d="M325 454l10 2" stroke="#c91c26" stroke-width="3"/><path d="M342 457l-8-5-1 8z" fill="#c91c26"/>
            <g class="triad"><text x="320" y="423">Y</text><text x="296" y="462">Z</text><text x="344" y="462">X</text></g>
          </svg>
      </div>
    </div>
    <footer class="brand"><svg viewBox="0 0 18 20" aria-hidden="true"><path d="M4 2q6-2 6 0 0 2-5 4 5-1 3 3-2 5-7 7l4-8M16 8q-5-1-5 1 0 1 2.500 3t0 4q-2 1-4 0" fill="none" stroke="#3a9a97" stroke-width="1.300"/></svg><span>SIMULIA</span></footer>
  </main>
</div>
</body>
</html>
```

FILE: styles.css
```css
* { box-sizing: border-box; }
body {
  margin: 0;
  height: 100vh;
  display: flex;
  flex-direction: column;
  overflow: hidden;
  background: #f7f7f8;
  color: #1c1c1c;
  font: 9px/15px "Open Sans", "Noto Sans", sans-serif;
}
button, select {
  font: inherit;
  color: inherit;
  margin: 0;
  padding: 0;
  border: 0;
  background: none;
}
svg { display: block; }
.defs { position: absolute; width: 0; height: 0; }

/* Menu bar */
.menubar {
  display: flex;
  align-items: center;
  height: 19px;
  padding: 0 4px;
  background: #f3f3f4;
  border-bottom: 1px solid #d9d9d9;
}
.app-icon { width: 11px; height: 11px; margin-right: 9px; }
.menus { display: flex; gap: 12px; flex: 1; }
.whats { display: flex; align-items: center; }
.whats svg { width: 7px; height: 9px; }
.winctl { display: flex; gap: 6px; }
.winctl svg { width: 10px; height: 10px; }

/* Toolbars */
.toolbars { background: linear-gradient(to right, #fdfdfd, #f8f8f8 40%, #efeff0); }
.toolrow { display: flex; height: 22px; }
.bar {
  display: flex;
  align-items: center;
  justify-content: space-between;
  background: #f3f3f4;
  border-bottom: 1px solid #cfcfcf;
  padding: 0 1px;
}
.bar button {
  display: flex;
  align-items: center;
  justify-content: center;
  width: 19px;
  height: 20px;
}
.bar svg { width: 17px; height: 16px; }
.bar text { font: bold 7px "Liberation Sans", sans-serif; fill: #a5323a; }
.bar .on { background: #bcd6ef; }
.bar .num { font: bold 15px "Liberation Sans", sans-serif; color: #b7322f; }
.bar .text {
  width: 18px;
  height: 18px;
  border: 1px solid #333;
  background: #fff;
  color: #ab1f2b;
  font: bold 14px "Liberation Serif", serif;
}
.bar .caret { width: 10px; }
.bar .caret svg { width: 8px; height: 8px; }
.grip {
  width: 3px;
  height: 14px;
  margin: 0 2px;
  background: repeating-linear-gradient(#b5b5b5 0 1px, transparent 1px 3px);
}
.file { width: 132px; }
.views { width: 252px; border-right: 1px solid #cfcfcf; }
.right { margin-left: auto; width: 592px; }
.toolrow:nth-child(2) .right { width: 432px; }
.toolrow .display.right { width: 170px; margin-right: 339px; border-right: 1px solid #cfcfcf; }
.toolrow:nth-child(3) { height: 24px; }

/* Drop-downs */
.combo {
  display: flex;
  align-items: center;
  height: 17px;
  border: 1px solid #8b8b8b;
  background: #fff;
}
.combo select {
  appearance: none;
  flex: 1;
  min-width: 0;
  height: 15px;
  padding-left: 3px;
}
.combo::after {
  content: "";
  align-self: stretch;
  width: 10px;
  background: #dedede url("data:image/svg+xml,%3Csvg xmlns='http://www.w3.org/2000/svg' width='8' height='6'%3E%3Cpath d='M1 1l3 3 3-3' fill='none' stroke='%23555'/%3E%3C/svg%3E") center no-repeat;
  border-left: 1px solid #aaa;
}
.materials { width: 106px; border-color: #ccc; }
.filter { width: 84px; background: #b9cfec; border-color: #c3cbd6; }
.filter::after { background: #c5c8cd; border: 0; }

/* Workspace */
.work { display: flex; flex: 1; min-height: 0; }
.side {
  display: flex;
  flex-direction: column;
  width: 207px;
  padding: 4px 0 3px;
  background: #fbfbfb;
}
.tabs { display: flex; height: 18px; padding-left: 1px; }
.tabs button { width: 42px; background: #eee; }
.tabs [aria-selected="true"] { background: #fff; }
.panel {
  display: flex;
  flex-direction: column;
  flex: 1;
  min-height: 0;
  margin-left: 4px;
  border: 1px solid #c8c8c8;
  border-top: 0;
  background: #fff;
}
.source {
  display: flex;
  align-items: center;
  gap: 7px;
  height: 27px;
  padding: 0 3px 0 2px;
  border-bottom: 1px solid #c8c8c8;
}
.source svg { width: 13px; height: 13px; }
.source > svg { margin-right: -7px; }
.source .combo { width: 111px; border-left: 0; }
.source .updown svg { width: 8px; }
.treebox { display: flex; flex: 1; min-height: 0; }
.tree {
  flex: 1;
  min-width: 0;
  margin: 0;
  padding: 0;
  overflow: hidden;
  list-style: none;
  white-space: nowrap;
  background: linear-gradient(#ddd, #ddd) 31px 30px / 1px 100% no-repeat;
}
.tree li { display: flex; align-items: center; height: 15px; padding-left: 28px; }
.tree .l0 { padding-left: 1px; }
.tree .l1 { padding-left: 15px; }
.tree .l3 { padding-left: 52px; }
.tree svg { width: 13px; height: 13px; margin: 0 4px 0 2px; }
.tree i { width: 7px; height: 1px; margin-right: 1px; }
.tg {
  width: 7px;
  height: 7px;
  margin-right: 1px;
  background: #fff;
  border: 1px solid #b8bdc6;
  font-size: 8px;
  line-height: 4px;
  color: #334;
}
.current { line-height: 12px; border-bottom: 1px solid #222; }
.l1 .tg { margin-right: 4px; }
.vbar {
  display: flex;
  flex-direction: column;
  align-items: center;
  width: 13px;
  background: #f2f2f2;
}
.vbar svg, .hbar svg { width: 8px; height: 8px; margin: 3px; }
.vbar span { width: 12px; height: 232px; margin-bottom: auto; background: #cbcbcb; }
.hbar { display: flex; align-items: center; height: 14px; padding-right: 12px; background: #f2f2f2; }
.hbar span { width: 148px; height: 13px; margin-right: auto; background: #cbcbcb; }

.main { display: flex; flex-direction: column; flex: 1; min-width: 0; padding-left: 5px; }
.context {
  display: flex;
  align-items: center;
  height: 24px;
  padding-left: 5px;
  background: #f5f4f5;
  border-bottom: 1px solid #dfe2ee;
}
.context label { margin-right: 5px; }
.context .combo { width: 84px; height: 19px; margin-right: 10px; border: 1px solid #777; }
.context .short { width: 70px; }
.context .spin::before {
  content: "";
  width: 8px;
  height: 13px;
  background: url("data:image/svg+xml,%3Csvg xmlns='http://www.w3.org/2000/svg' width='6' height='12'%3E%3Cpath d='M1 4l2-3 2 3zM1 8l2 3 2-3z' fill='%23444'/%3E%3C/svg%3E") center no-repeat;
}
.context .spin select { padding-left: 1px; }
.stage { display: flex; flex: 1; min-height: 0; }
.toolbox { width: 47px; padding: 4px 2px; background: #f1f1f2; }
.tools {
  display: grid;
  grid-template-columns: 22px 22px;
  grid-auto-rows: 22px;
  padding-bottom: 2px;
  margin-bottom: 4px;
  border-bottom: 1px solid #ccc;
}
.tools:last-child { border: 0; }
.tools button { display: grid; place-items: center; }
.tools svg { width: 17px; height: 16px; }
.more { position: relative; }
.more::after {
  content: "";
  position: absolute;
  right: 1px;
  bottom: 1px;
  border: 1px solid #222;
}
.tools .xyz { place-content: center; font-size: 7px; line-height: 8px; }
.tools .xyz svg { width: 8px; height: 8px; }
.viewport {
  flex: 1;
  min-width: 0;
  background: linear-gradient(#1b2c4a, #25334f 30%, #303c58 58%, #4c5c7a 72%, #7484a1 86%, #a3afcb);
}
.viewport svg { width: 100%; height: 100%; }
.cables path {
  fill: none;
  stroke: #3987da;
  stroke-width: 2.8;
  stroke-linecap: round;
  stroke-dasharray: .4 5;
}
.compass { font: 9px "Liberation Sans", sans-serif; fill: #c2c49b; }
.triad { font: 13px "Liberation Sans", sans-serif; fill: #fff; }
.brand {
  display: flex;
  align-items: center;
  justify-content: flex-end;
  gap: 4px;
  height: 29px;
  padding-right: 2px;
  background: #f9f9f9;
  color: #3a9a97;
  font: italic bold 12px "DejaVu Sans", sans-serif;
}
.brand svg { width: 18px; height: 20px; }
```
